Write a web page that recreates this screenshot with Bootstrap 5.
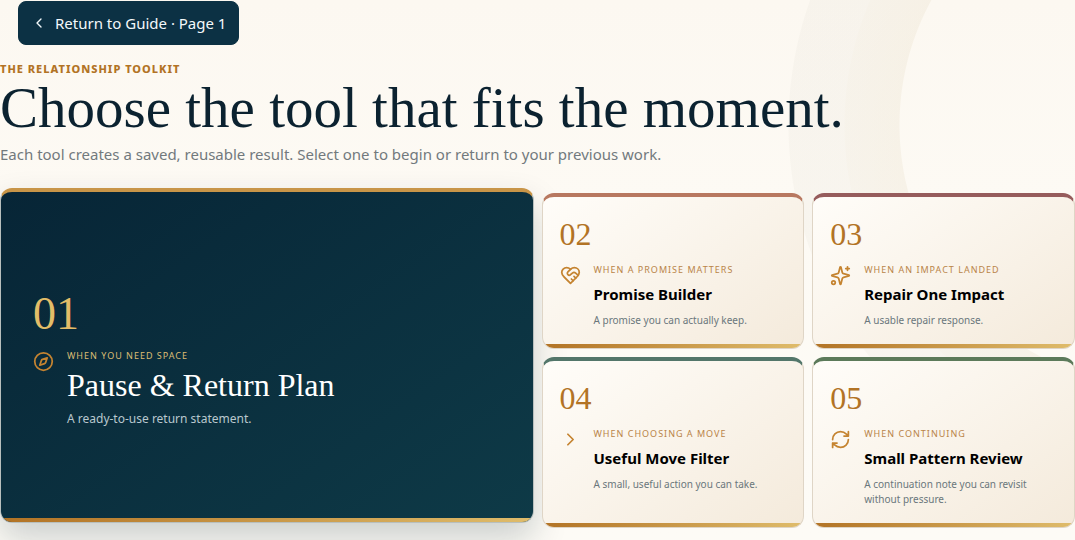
<!DOCTYPE html>
<html lang="en">
<head>
<meta charset="utf-8">
<meta name="viewport" content="width=device-width, initial-scale=1">
<title>The Relationship Toolkit</title>
<link rel="stylesheet" href="https://cdn.jsdelivr.net/npm/bootstrap@5.3.0/dist/css/bootstrap.min.css">
<style>
  :root {
    --ink: #0b2230;
    --navy: #0c3144;
    --gold: #b27325;
    --gold-light: #dfbc6b;
    --serif: "Liberation Serif", serif;
  }
  body {
    font-family: "Noto Sans", sans-serif;
    color: #000;
    min-height: 100vh;
    overflow-x: hidden;
    background:
      radial-gradient(circle at calc(100% + 85px) 125px, transparent 260px, rgba(226, 214, 188, .22) 261px, rgba(232, 226, 212, .28) 315px, rgba(226, 222, 212, .18) 316px, rgba(226, 222, 212, .18) 371px, transparent 372px),
      linear-gradient(#fcf8f1, #fdfaf4 200px, #fdfbf6);
  }
  .back-btn {
    --bs-btn-color: #f3f8fa;
    --bs-btn-bg: var(--navy);
    --bs-btn-border-color: var(--navy);
    --bs-btn-hover-color: #fff;
    --bs-btn-hover-bg: #124258;
    --bs-btn-font-size: 15px;
    --bs-btn-line-height: 22px;
    --bs-btn-padding-x: 12px;
    --bs-btn-padding-y: 10px;
    --bs-btn-border-radius: 8px;
    margin: 1px 0 0 18px;
  }
  .eyebrow { font-size: 11px; line-height: 16px; font-weight: 800; letter-spacing: 1px; color: var(--gold); }
  .headline { font: 400 57px/54px var(--serif); color: var(--ink); }
  .intro { font-size: 15px; line-height: 22px; margin-bottom: 28px; color: #72797d; }

  .tool-grid { display: grid; grid-template-columns: repeat(12, 1fr); gap: 8px; }
  .tool {
    --edge: #b87860;
    grid-column: span 3;
    position: relative;
    overflow: hidden;
    padding: 24px 17px 20px;
    color: #000;
    border: 1px solid #dfd5c6;
    border-top: 4px solid var(--edge);
    border-radius: 12px;
    background: linear-gradient(145deg, #fffdf9, #f4eadb);
  }
  .tool::after {
    content: "";
    position: absolute;
    inset: auto 0 0;
    height: 4px;
    background: linear-gradient(90deg, var(--gold), var(--gold-light));
  }
  .tool-repair { --edge: #965c5c; }
  .tool-move { --edge: #53766a; }
  .tool-review { --edge: #5c7a5a; }
  .tool-num { font: 400 32px/26px var(--serif); color: var(--gold); margin-bottom: 16px; }
  .tool-body { display: flex; gap: 13px; }
  .tool-icon { width: 21px; height: 21px; flex: none; margin-top: 2px; color: #c58431; }
  .tool-when { font-size: 9px; line-height: 14px; letter-spacing: 1px; color: #b98448; }
  .tool-title { font-size: 15px; line-height: 20px; font-weight: 700; margin: 7px 0 9px; }
  .tool-text { font-size: 10px; line-height: 15px; color: #6a777c; }

  .tool-main {
    --edge: #c89548;
    grid-column: span 6;
    grid-row: span 2;
    padding: 8px 32px 0;
    border-color: #b8bfbd;
    border-top-color: var(--edge);
    background: linear-gradient(145deg, #072536, #0e3a47);
    box-shadow: 0 16px 34px rgba(12, 38, 52, .2);
    transform: translateY(-5px);
  }
  .tool-main .tool-num { font-size: 46px; line-height: 46px; color: #e3bd68; margin-bottom: 12px; }
  .tool-main .tool-when { color: #dcbd74; }
  .tool-main .tool-title { font: 400 32px/36px var(--serif); color: #fff; margin: 4px 0; }
  .tool-main .tool-text { font-size: 12px; line-height: 24px; color: #b9c8ce; }

  @media (max-width: 767px) {
    .tool { grid-column: span 6; }
    .tool-main { grid-column: span 12; padding: 48px 32px; }
    .headline { font-size: 40px; line-height: 44px; }
  }
</style>
</head>
<body>
<svg class="d-none" aria-hidden="true">
  <defs>
    <g id="compass"><circle cx="12" cy="12" r="10"/><path d="m16.24 7.76-1.8 5.41a2 2 0 0 1-1.27 1.27l-5.41 1.8 1.8-5.41a2 2 0 0 1 1.27-1.27z"/></g>
    <g id="handshake"><path d="M19 14c1.49-1.46 3-3.21 3-5.5A5.5 5.5 0 0 0 16.5 3c-1.76 0-3 .5-4.5 2-1.5-1.5-2.74-2-4.5-2A5.5 5.5 0 0 0 2 8.5c0 2.3 1.5 4.05 3 5.5l7 7Z"/><path d="M12 5 9.04 7.96a2.17 2.17 0 0 0 0 3.08c.82.82 2.13.85 3 .07l2.07-1.9a2.82 2.82 0 0 1 3.79 0l2.96 2.66"/><path d="m18 15-2-2"/><path d="m15 18-2-2"/></g>
    <g id="sparkles"><path d="M9.94 15.5A2 2 0 0 0 8.5 14.06l-6.14-1.58a.5.5 0 0 1 0-.96L8.5 9.94A2 2 0 0 0 9.94 8.5l1.58-6.14a.5.5 0 0 1 .96 0l1.58 6.14a2 2 0 0 0 1.44 1.44l6.14 1.58a.5.5 0 0 1 0 .96l-6.14 1.58a2 2 0 0 0-1.44 1.44l-1.58 6.14a.5.5 0 0 1-.96 0z"/><path d="M20 2v4M22 4h-4"/><circle cx="4" cy="20" r="2"/></g>
    <path id="chevron" d="m9 18 6-6-6-6"/>
    <path id="refresh" d="M3 12a9 9 0 0 1 9-9 9.75 9.75 0 0 1 6.74 2.74L21 8M21 3v5h-5M21 12a9 9 0 0 1-9 9 9.75 9.75 0 0 1-6.74-2.74L3 16M8 16H3v5"/>
  </defs>
</svg>

<header>
  <button type="button" class="btn back-btn d-inline-flex align-items-center gap-2">
    <svg width="16" height="16" viewBox="0 0 24 24" fill="none" stroke="currentColor" stroke-width="2" stroke-linecap="round" stroke-linejoin="round" aria-hidden="true"><path d="m15 18-6-6 6-6"/></svg>
    Return to Guide · Page 1
  </button>
  <p class="eyebrow text-uppercase mt-3 mb-1">The Relationship Toolkit</p>
  <h1 class="headline mb-0">Choose the tool that fits the moment.</h1>
  <p class="intro mt-2">Each tool creates a saved, reusable result. Select one to begin or return to your previous work.</p>
</header>

<main class="tool-grid pb-2">
  <a href="#pause" class="tool tool-main d-flex flex-column justify-content-center text-decoration-none">
    <div class="tool-num">01</div>
    <div class="tool-body">
      <svg class="tool-icon" viewBox="0 0 24 24" fill="none" stroke="currentColor" stroke-width="2" stroke-linecap="round" stroke-linejoin="round" aria-hidden="true"><use href="#compass"/></svg>
      <div>
        <div class="tool-when text-uppercase">When you need space</div>
        <h2 class="tool-title">Pause &amp; Return Plan</h2>
        <p class="tool-text mb-0">A ready-to-use return statement.</p>
      </div>
    </div>
  </a>
  <a href="#promise" class="tool text-decoration-none">
    <div class="tool-num">02</div>
    <div class="tool-body">
      <svg class="tool-icon" viewBox="0 0 24 24" fill="none" stroke="currentColor" stroke-width="2" stroke-linecap="round" stroke-linejoin="round" aria-hidden="true"><use href="#handshake"/></svg>
      <div>
        <div class="tool-when text-uppercase">When a promise matters</div>
        <h2 class="tool-title">Promise Builder</h2>
        <p class="tool-text mb-0">A promise you can actually keep.</p>
      </div>
    </div>
  </a>
  <a href="#repair" class="tool tool-repair text-decoration-none">
    <div class="tool-num">03</div>
    <div class="tool-body">
      <svg class="tool-icon" viewBox="0 0 24 24" fill="none" stroke="currentColor" stroke-width="2" stroke-linecap="round" stroke-linejoin="round" aria-hidden="true"><use href="#sparkles"/></svg>
      <div>
        <div class="tool-when text-uppercase">When an impact landed</div>
        <h2 class="tool-title">Repair One Impact</h2>
        <p class="tool-text mb-0">A usable repair response.</p>
      </div>
    </div>
  </a>
  <a href="#move" class="tool tool-move text-decoration-none">
    <div class="tool-num">04</div>
    <div class="tool-body">
      <svg class="tool-icon" viewBox="0 0 24 24" fill="none" stroke="currentColor" stroke-width="2" stroke-linecap="round" stroke-linejoin="round" aria-hidden="true"><use href="#chevron"/></svg>
      <div>
        <div class="tool-when text-uppercase">When choosing a move</div>
        <h2 class="tool-title">Useful Move Filter</h2>
        <p class="tool-text mb-0">A small, useful action you can take.</p>
      </div>
    </div>
  </a>
  <a href="#review" class="tool tool-review text-decoration-none">
    <div class="tool-num">05</div>
    <div class="tool-body">
      <svg class="tool-icon" viewBox="0 0 24 24" fill="none" stroke="currentColor" stroke-width="2" stroke-linecap="round" stroke-linejoin="round" aria-hidden="true"><use href="#refresh"/></svg>
      <div>
        <div class="tool-when text-uppercase">When continuing</div>
        <h2 class="tool-title">Small Pattern Review</h2>
        <p class="tool-text mb-0">A continuation note you can revisit without pressure.</p>
      </div>
    </div>
  </a>
</main>
<script src="https://cdn.jsdelivr.net/npm/bootstrap@5.3.0/dist/js/bootstrap.bundle.min.js"></script>
</body>
</html>
